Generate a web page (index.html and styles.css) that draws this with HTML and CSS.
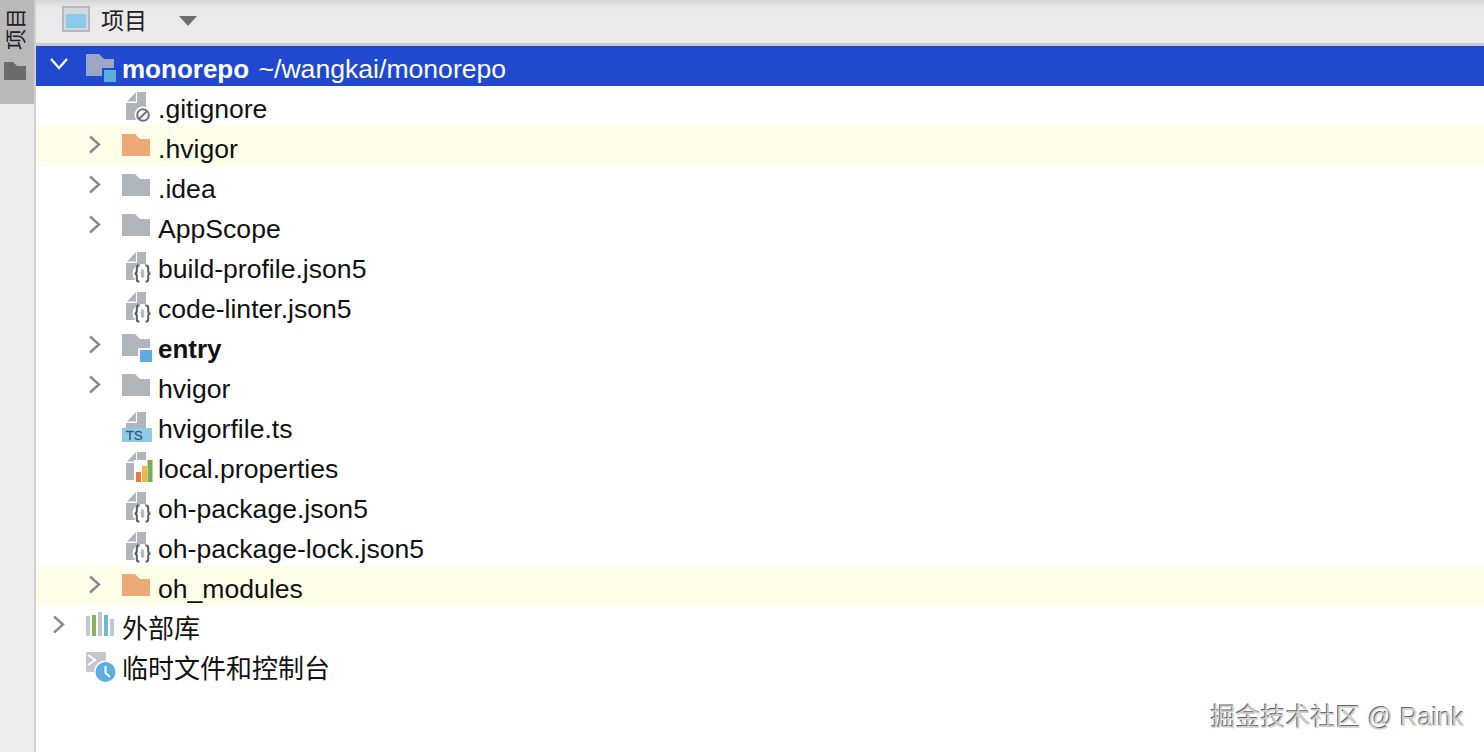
FILE: index.html
```html
<!DOCTYPE html>
<html lang="zh">
<head>
<meta charset="utf-8">
<title>项目</title>
<link rel="stylesheet" href="styles.css">
</head>
<body>
<svg class="defs" width="0" height="0" aria-hidden="true">
  <defs>
    <symbol id="arrow" viewBox="0 0 14 20"><path d="M2 1.500 L11 9.500 L2 17.500" fill="none" stroke="#8a8a8a" stroke-width="2.400"/></symbol>
    <symbol id="folder" viewBox="0 0 36 40"><path d="M0 8H13L18 13H28V30H0Z" fill="currentColor"/></symbol>
    <symbol id="modfolder" viewBox="0 0 36 40"><path d="M0 8H13L18 13H28V22H16V30H0Z" fill="currentColor"/><rect x="18" y="24" width="12" height="12" fill="#5cade0"/></symbol>
    <symbol id="doc" viewBox="0 0 36 40"><path d="M15 6H24V34H4V17H15Z" fill="#afb5ba"/><path d="M14 6V15.500H5Z" fill="#afb5ba"/></symbol>
    <symbol id="json" viewBox="0 0 36 40">
      <use href="#doc"/>
      <ellipse cx="20.500" cy="27.500" rx="10" ry="9.500" fill="#fff"/>
      <path d="M17.500 19.500H16.500Q14.800 19.500 14.800 22V25Q14.800 27.500 12.500 27.500Q14.800 27.500 14.800 30V33Q14.800 35.500 16.500 35.500H17.500M23.500 19.500H24.500Q26.200 19.500 26.200 22V25Q26.200 27.500 28.500 27.500Q26.200 27.500 26.200 30V33Q26.200 35.500 24.500 35.500H23.500" fill="none" stroke="#555b5f" stroke-width="2"/>
      <ellipse cx="20.500" cy="27.500" rx="1.800" ry="4.500" fill="#b4bac0"/>
    </symbol>
  </defs>
</svg>

<div class="app">
  <aside class="rail">
    <div class="rail-tab">
      <span class="rail-label">项目</span>
      <svg class="rail-icon" width="22" height="18" viewBox="0 0 22 18"><path d="M0 0H9L13 4H22V18H0Z" fill="#6b6b6b"/></svg>
    </div>
  </aside>
  <main class="panel">
    <header class="toolbar">
      <svg class="view-icon" width="28" height="26" viewBox="0 0 28 26"><rect width="28" height="26" fill="#b4b9bc"/><rect x="2" y="2" width="24" height="22" fill="#d4d8da"/><rect x="4" y="8" width="20" height="14" fill="#89cbe8"/></svg>
      <span class="view-title">项目</span>
      <svg class="view-caret" width="18" height="10" viewBox="0 0 18 10"><path d="M0 0H18L9 10Z" fill="#6e6e6e"/></svg>
    </header>
    <ul class="tree">
      <li class="row selected">
        <span class="slot"><svg class="chev" width="20" height="14" viewBox="0 0 20 14"><path d="M2 2L10 11L18 2" fill="none" stroke="#fff" stroke-width="2.400"/></svg></span>
        <svg class="icon root-folder"><use href="#modfolder"/></svg>
        <span class="name"><b class="root-name">monorepo</b> ~/wangkai/monorepo</span>
      </li>
      <li class="row nested">
        <span class="slot"></span>
        <svg class="icon" viewBox="0 0 36 40"><use href="#doc"/><circle cx="21" cy="29" r="8.500" fill="#fff"/><circle cx="21" cy="29" r="5.800" fill="none" stroke="#6e7478" stroke-width="2"/><path d="M17 33L25 25" stroke="#6e7478" stroke-width="2"/></svg>
        <span class="name">.gitignore</span>
      </li>
      <li class="row nested marked">
        <span class="slot"><svg class="arrow"><use href="#arrow"/></svg></span>
        <svg class="icon excluded"><use href="#folder"/></svg>
        <span class="name">.hvigor</span>
      </li>
      <li class="row nested">
        <span class="slot"><svg class="arrow"><use href="#arrow"/></svg></span>
        <svg class="icon plain"><use href="#folder"/></svg>
        <span class="name">.idea</span>
      </li>
      <li class="row nested">
        <span class="slot"><svg class="arrow"><use href="#arrow"/></svg></span>
        <svg class="icon plain"><use href="#folder"/></svg>
        <span class="name">AppScope</span>
      </li>
      <li class="row nested">
        <span class="slot"></span>
        <svg class="icon"><use href="#json"/></svg>
        <span class="name">build-profile.json5</span>
      </li>
      <li class="row nested">
        <span class="slot"></span>
        <svg class="icon"><use href="#json"/></svg>
        <span class="name">code-linter.json5</span>
      </li>
      <li class="row nested">
        <span class="slot"><svg class="arrow"><use href="#arrow"/></svg></span>
        <svg class="icon plain"><use href="#modfolder"/></svg>
        <span class="name"><b>entry</b></span>
      </li>
      <li class="row nested">
        <span class="slot"><svg class="arrow"><use href="#arrow"/></svg></span>
        <svg class="icon plain"><use href="#folder"/></svg>
        <span class="name">hvigor</span>
      </li>
      <li class="row nested">
        <span class="slot"></span>
        <svg class="icon" viewBox="0 0 36 40"><use href="#doc"/><rect x="0" y="22" width="30" height="14" fill="#8fcbe8"/><text class="ts-label" x="4" y="34">TS</text></svg>
        <span class="name">hvigorfile.ts</span>
      </li>
      <li class="row nested">
        <span class="slot"></span>
        <svg class="icon" viewBox="0 0 36 40"><use href="#doc"/><rect x="12" y="14" width="19" height="23" fill="#fff"/><rect x="14" y="26" width="5" height="10" fill="#e8783c"/><rect x="20" y="20" width="5" height="16" fill="#e8b84c"/><rect x="25.500" y="14" width="5" height="22" fill="#79ad4f"/></svg>
        <span class="name">local.properties</span>
      </li>
      <li class="row nested">
        <span class="slot"></span>
        <svg class="icon"><use href="#json"/></svg>
        <span class="name">oh-package.json5</span>
      </li>
      <li class="row nested">
        <span class="slot"></span>
        <svg class="icon"><use href="#json"/></svg>
        <span class="name">oh-package-lock.json5</span>
      </li>
      <li class="row nested marked">
        <span class="slot"><svg class="arrow"><use href="#arrow"/></svg></span>
        <svg class="icon excluded"><use href="#folder"/></svg>
        <span class="name">oh_modules</span>
      </li>
      <li class="row">
        <span class="slot"><svg class="arrow"><use href="#arrow"/></svg></span>
        <svg class="icon" viewBox="0 0 36 40"><rect x="0" y="10" width="4" height="20" fill="#c2c7cb"/><rect x="6" y="9" width="4" height="21" fill="#84b560"/><rect x="12" y="6" width="4" height="24" fill="#c2c7cb"/><rect x="18" y="9" width="4" height="21" fill="#6fb6dc"/><rect x="24" y="13" width="4" height="17" fill="#c2c7cb"/></svg>
        <span class="name cjk">外部库</span>
      </li>
      <li class="row">
        <span class="slot"></span>
        <svg class="icon" viewBox="0 0 36 40"><rect x="0" y="6" width="20" height="20" fill="#c2c7cb"/><path d="M2 9L9 14L2 19" fill="none" stroke="#fff" stroke-width="2"/><circle cx="19.500" cy="26" r="11.500" fill="#fff"/><circle cx="19.500" cy="26" r="10" fill="#5cade0"/><path d="M19.500 20V27L24 31" fill="none" stroke="#fff" stroke-width="2"/></svg>
        <span class="name cjk">临时文件和控制台</span>
      </li>
    </ul>
  </main>
</div>
<div class="watermark">掘金技术社区 @ Raink</div>
</body>
</html>
```
FILE: styles.css
```css
* { box-sizing: border-box; }

html, body {
  margin: 0;
  height: 100%;
  overflow: hidden;
  background: #fff;
}

body {
  font-family: "Liberation Sans", "Noto Sans CJK SC", sans-serif;
  color: #111;
}

.defs { position: absolute; }

.app {
  display: flex;
  height: 752px;
}

.rail {
  width: 36px;
  flex: none;
  background: #ededed;
  border-right: 2px solid #cfcfcf;
}

.rail-tab {
  height: 104px;
  background: #b9b9b9;
  display: flex;
  flex-direction: column;
  align-items: center;
  padding-top: 6px;
  gap: 12px;
}

.rail-label {
  writing-mode: vertical-rl;
  text-orientation: sideways;
  transform: rotate(180deg);
  font-size: 21px;
  line-height: 26px;
  height: 44px;
  margin-right: 3px;
  color: #222;
}

.rail-icon {
  flex: none;
  margin-right: 4px;
}

.panel {
  flex: 1;
  min-width: 0;
  display: flex;
  flex-direction: column;
}

.toolbar {
  height: 46px;
  flex: none;
  display: flex;
  align-items: center;
  padding: 0 0 8px 26px;
  background: linear-gradient(#d6d6d6 0, #e8e8e8 8px, #ececec 42px, #c9c9c9 44px);
}

.view-icon { flex: none; }

.view-title {
  margin-left: 11px;
  font-size: 23px;
  color: #222;
}

.view-caret {
  margin-left: 32px;
  flex: none;
  position: relative;
  top: 2px;
}

.tree {
  list-style: none;
  margin: 0;
  padding: 0;
}

.row {
  height: 40px;
  display: flex;
  align-items: center;
  font-size: 26.600px;
}

.row.nested { padding-left: 36px; }
.row.marked { background: #fffee9; }

.row.selected {
  background: #2049d0;
  color: #fff;
}

.slot {
  width: 50px;
  flex: none;
  padding-left: 16px;
  display: flex;
  align-items: center;
  height: 36px;
  margin-bottom: 2px;
}

.arrow {
  width: 14px;
  height: 20px;
}

.chev {
  margin-left: -3px;
  margin-bottom: 2px;
}

.icon {
  width: 36px;
  height: 40px;
  flex: none;
}

.plain { color: #afb5ba; }
.excluded { color: #eeaa76; }
.root-folder { color: #9aa8c6; }

.name {
  white-space: nowrap;
  line-height: 40px;
  padding-top: 5px;
}

.name b {
  font-size: 26px;
}

.name .root-name {
  margin-right: 2px;
}

.cjk {
  font-size: 26px;
  padding-top: 5px;
}

.ts-label {
  font-family: "Liberation Sans", sans-serif;
  font-size: 13px;
  fill: #2f5a78;
  stroke: #2f5a78;
  stroke-width: 0.300px;
}

.watermark {
  position: absolute;
  right: 20px;
  top: 702px;
  font-size: 25px;
  line-height: 30px;
  color: #cfcfcf;
  text-shadow: -1px -1px 0 #666;
}
```
